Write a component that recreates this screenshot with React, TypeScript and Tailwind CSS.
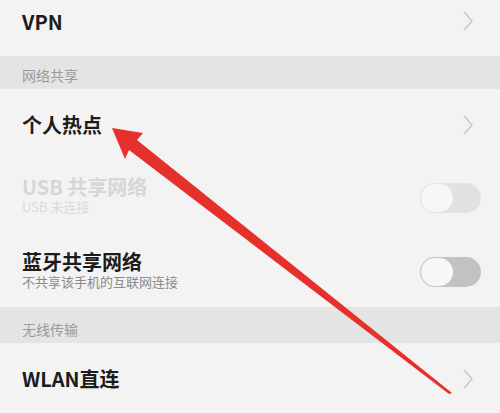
import React from "react";

const font = { fontFamily: '"Noto Sans CJK SC", "Noto Sans", sans-serif' };

const Chevron = () => (
  <svg width="12" height="22" viewBox="0 0 12 22" className="shrink-0">
    <path d="M2 2 L10 11 L2 20" fill="none" stroke="#cbcbcb" strokeWidth="1.6" />
  </svg>
);

const Toggle = ({ disabled }: { disabled?: boolean }) => (
  <div
    className={`relative h-[30px] w-[61px] rounded-full ${
      disabled ? "bg-[#e2e2e2]" : "bg-[#c2c2c2]"
    }`}
  >
    <div
      className={`absolute left-0 top-0 h-[30px] w-[34px] rounded-full border ${
        disabled ? "border-[#e4e4e4] bg-[#f7f7f7]" : "border-[#c8c8c8] bg-[#f7f7f7]"
      }`}
    />
  </div>
);

const Band = ({ label, h }: { label: string; h: string }) => (
  <div className={`flex ${h} items-end bg-[#e4e4e4] px-[22px] pb-[3px]`}>
    <span className="text-[14px] text-[#9a9a9a]">{label}</span>
  </div>
);

export default function App() {
  return (
    <div className="relative h-[413px] w-[500px] overflow-hidden bg-[#f3f3f3]" style={font}>
      <div className="flex h-[56px] items-start justify-between pl-[22px] pr-[26px] pt-[7px]">
        <span className="text-[20px] font-bold text-[#1c1c1c]">VPN</span>
        <div className="pt-[3px]">
          <Chevron />
        </div>
      </div>

      <Band label="网络共享" h="h-[33px]" />

      <div className="flex h-[69px] items-start justify-between pl-[22px] pr-[26px] pt-[21px]">
        <span className="text-[20px] font-bold text-[#1c1c1c]">个人热点</span>
        <div className="pt-[4px]">
          <Chevron />
        </div>
      </div>

      <div className="flex h-[75px] items-start justify-between pl-[22px] pr-[19px] pt-[17px]">
        <div className="flex flex-col">
          <span className="text-[20px] font-bold leading-[24px] text-[#d6d6d6]">USB 共享网络</span>
          <span className="text-[13px] leading-[16px] text-[#dadada]">USB 未连接</span>
        </div>
        <div className="pt-[8px]">
          <Toggle disabled />
        </div>
      </div>

      <div className="flex h-[74px] items-start justify-between pl-[22px] pr-[19px] pt-[17px]">
        <div className="flex flex-col">
          <span className="text-[20px] font-bold leading-[24px] text-[#1c1c1c]">蓝牙共享网络</span>
          <span className="text-[13px] leading-[16px] text-[#8a8a8a]">不共享该手机的互联网连接</span>
        </div>
        <div className="pt-[7px]">
          <Toggle />
        </div>
      </div>

      <Band label="无线传输" h="h-[36px]" />

      <div className="flex h-[70px] items-start justify-between pl-[22px] pr-[26px] pt-[21px]">
        <span className="text-[20px] font-bold text-[#1c1c1c]">WLAN直连</span>
        <div className="pt-[4px]">
          <Chevron />
        </div>
      </div>

      {/* red annotation arrow */}
      <svg className="pointer-events-none absolute left-0 top-0" width="500" height="413">
        <polygon points="112,128 143,133 137,140 452,393 449,394 129,150 125,159" fill="#e6302c" />
      </svg>
    </div>
  );
}
